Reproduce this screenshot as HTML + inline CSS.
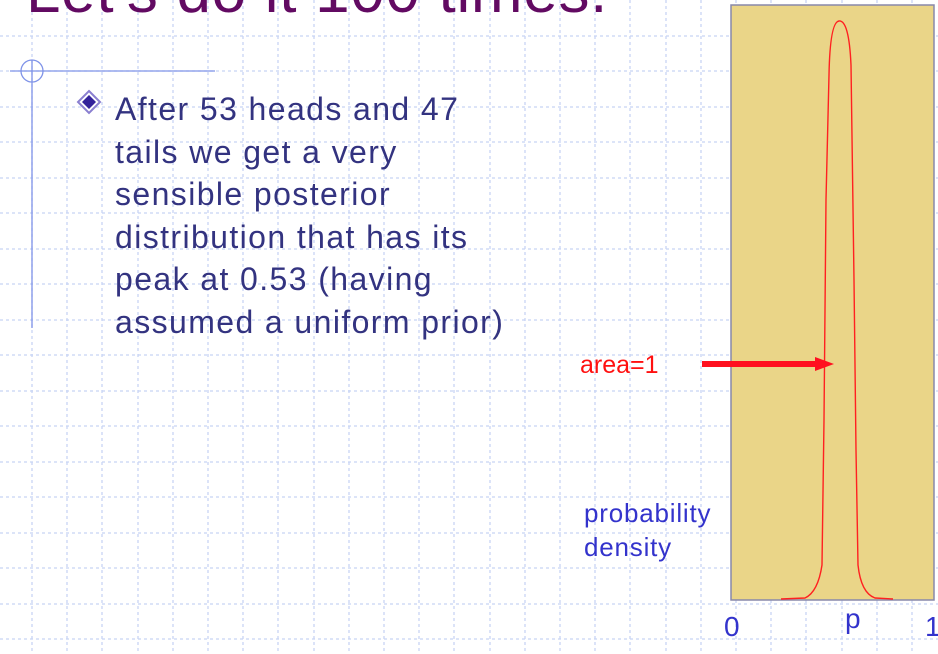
<!DOCTYPE html>
<html><head><meta charset="utf-8"><style>
html,body{margin:0;padding:0;}
body{width:938px;height:654px;position:relative;overflow:hidden;background:#fff;font-family:"Liberation Sans",sans-serif;}
.t{position:absolute;white-space:nowrap;}
</style></head><body>
<svg width="938" height="654" style="position:absolute;left:0;top:0">
<g stroke="#c8d4f4" stroke-width="1.3" stroke-dasharray="3,3">
<line x1="32" y1="0" x2="32" y2="654"/><line x1="67" y1="0" x2="67" y2="654"/><line x1="102" y1="0" x2="102" y2="654"/><line x1="138" y1="0" x2="138" y2="654"/><line x1="173" y1="0" x2="173" y2="654"/><line x1="208" y1="0" x2="208" y2="654"/><line x1="243" y1="0" x2="243" y2="654"/><line x1="278" y1="0" x2="278" y2="654"/><line x1="314" y1="0" x2="314" y2="654"/><line x1="349" y1="0" x2="349" y2="654"/><line x1="384" y1="0" x2="384" y2="654"/><line x1="419" y1="0" x2="419" y2="654"/><line x1="454" y1="0" x2="454" y2="654"/><line x1="490" y1="0" x2="490" y2="654"/><line x1="525" y1="0" x2="525" y2="654"/><line x1="560" y1="0" x2="560" y2="654"/><line x1="595" y1="0" x2="595" y2="654"/><line x1="630" y1="0" x2="630" y2="654"/><line x1="666" y1="0" x2="666" y2="654"/><line x1="701" y1="0" x2="701" y2="654"/><line x1="736" y1="0" x2="736" y2="654"/><line x1="771" y1="0" x2="771" y2="654"/><line x1="806" y1="0" x2="806" y2="654"/><line x1="842" y1="0" x2="842" y2="654"/><line x1="877" y1="0" x2="877" y2="654"/><line x1="912" y1="0" x2="912" y2="654"/>
<line x1="0" y1="36" x2="938" y2="36"/><line x1="0" y1="71" x2="938" y2="71"/><line x1="0" y1="107" x2="938" y2="107"/><line x1="0" y1="142" x2="938" y2="142"/><line x1="0" y1="178" x2="938" y2="178"/><line x1="0" y1="213" x2="938" y2="213"/><line x1="0" y1="249" x2="938" y2="249"/><line x1="0" y1="284" x2="938" y2="284"/><line x1="0" y1="320" x2="938" y2="320"/><line x1="0" y1="355" x2="938" y2="355"/><line x1="0" y1="391" x2="938" y2="391"/><line x1="0" y1="426" x2="938" y2="426"/><line x1="0" y1="462" x2="938" y2="462"/><line x1="0" y1="497" x2="938" y2="497"/><line x1="0" y1="533" x2="938" y2="533"/><line x1="0" y1="568" x2="938" y2="568"/><line x1="0" y1="604" x2="938" y2="604"/><line x1="0" y1="639" x2="938" y2="639"/>
</g>
<g stroke="#7f93e8" stroke-width="1.3" fill="none">
<line x1="10" y1="71" x2="215" y2="71"/>
<line x1="32" y1="60" x2="32" y2="328"/>
<circle cx="32" cy="71" r="11"/>
</g>
<path d="M89 91 L100 102 L89 113 L78 102 Z" fill="#fff" stroke="#8a7fd0" stroke-width="2"/>
<path d="M89 95 L96 102 L89 109 L82 102 Z" fill="#33229a"/>
<rect x="731" y="5" width="203" height="595" fill="#ead588" stroke="#8888aa" stroke-width="1.5"/>
<path d="M781 599 L805 598 Q818 592 822 565 L824 420 L826 200 L829 75 Q830 22 839 21 Q849 20 851 65 L854 280 L856 450 L858 565 Q861 593 875 598 L893 599" fill="none" stroke="#ff2020" stroke-width="1.4"/>
<rect x="702" y="361" width="116" height="6" fill="#ff1020"/>
<path d="M815 357 L834 364 L815 371 Z" fill="#ff1020"/>
</svg>
<div class="t" style="left:26px;top:-44px;font-size:62px;letter-spacing:0.7px;color:#620a62;">Let's do it 100 times.</div>
<div class="t" style="left:115px;top:88px;font-size:32px;letter-spacing:1.4px;line-height:42.5px;color:#333380;">After 53 heads and 47<br>tails we get a very<br>sensible posterior<br>distribution that has its<br>peak at 0.53 (having<br>assumed a uniform prior)</div>
<div class="t" style="left:580px;top:351px;font-size:25px;color:#ff1010;">area=1</div>
<div class="t" style="left:584px;top:496px;font-size:26px;letter-spacing:0.8px;line-height:34px;color:#3333cc;">probability<br>density</div>
<div class="t" style="left:724px;top:611px;font-size:28px;color:#3333cc;">0</div>
<div class="t" style="left:845px;top:603px;font-size:28px;color:#3333cc;">p</div>
<div class="t" style="left:925px;top:611px;font-size:28px;color:#3333cc;">1</div>
</body></html>
